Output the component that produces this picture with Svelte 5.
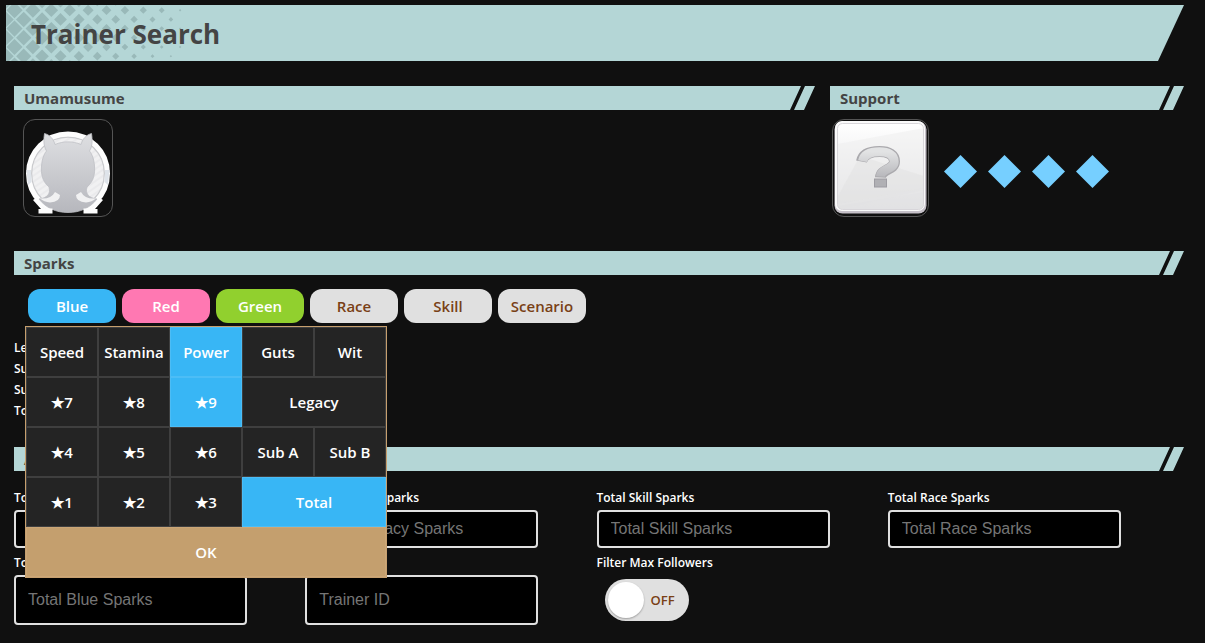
<script>
  const tabs = [
    { name: 'Blue', tone: 'blue' },
    { name: 'Red', tone: 'red' },
    { name: 'Green', tone: 'green' },
    { name: 'Race', tone: '' },
    { name: 'Skill', tone: '' },
    { name: 'Scenario', tone: '' }
  ];

  const cells = [
    'Speed', 'Stamina', 'Power', 'Guts', 'Wit',
    '★7', '★8', '★9', 'Legacy',
    '★4', '★5', '★6', 'Sub A', 'Sub B',
    '★1', '★2', '★3', 'Total'
  ];
  const wide = ['Legacy', 'Total'];
  let picked = $state(['Power', '★9', 'Total']);
  let followers = $state(false);

  function toggle(name) {
    picked = picked.includes(name) ? picked.filter((p) => p !== name) : [...picked, name];
  }

  const summary = ['Legacy', 'Sub A', 'Sub B', 'Total'];
  const fields = [
    { id: 'white', label: 'Total White Sparks' },
    { id: 'legacy', label: 'Total Legacy Sparks' },
    { id: 'skill', label: 'Total Skill Sparks' },
    { id: 'race', label: 'Total Race Sparks' },
    { id: 'blue', label: 'Total Blue Sparks' },
    { id: 'trainer', label: 'Trainer ID' }
  ];

  // Halftone: a staggered grid of diamonds that shrink to the right and downwards.
  let halftone = '';
  for (let row = 0; row < 8; row++) {
    const y = -4 + row * 9.2;
    for (let col = 0; col < 11; col++) {
      const x = (row % 2 ? -9.9 : -0.7) + col * 18.4;
      if (x > 176) continue;
      const r = x > 168 ? 1.2 : 8.4 - x * (0.034 + y * 0.0002);
      halftone += `M${x} ${y - r}L${x + r} ${y}L${x} ${y + r}L${x - r} ${y}Z`;
    }
  }
</script>

<main>
  <header>
    <svg class="halftone" width="190" height="56" aria-hidden="true"><path d={halftone} fill="#99b9b9" /></svg>
    <h1>Trainer Search</h1>
  </header>

  <div class="content">
    <div class="top">
      <section>
        <h2>Umamusume</h2>
        <div class="slot">
          <button class="card" aria-label="Choose Umamusume">
            <svg viewBox="0 0 88 96" width="88" height="96">
              <defs>
                <linearGradient id="body" x1="0" y1="0" x2="0" y2="1">
                  <stop offset="0" stop-color="#dedfe2" />
                  <stop offset="1" stop-color="#b6b7bd" />
                </linearGradient>
                <pattern id="stripe" width="5" height="5" patternUnits="userSpaceOnUse" patternTransform="rotate(55)">
                  <rect width="5" height="5" fill="#f1f1f2" />
                  <rect width="2" height="5" fill="#eaeaec" />
                </pattern>
                <clipPath id="ring"><rect width="88" height="89" /></clipPath>
              </defs>
              <g clip-path="url(#ring)">
                <circle cx="44" cy="53.500" r="39" fill="url(#stripe)" />
                <circle cx="44" cy="53.500" r="36.500" fill="none" stroke="#c9cacd" stroke-width="1.500" />
                <circle cx="44" cy="53.500" r="39.500" fill="none" stroke="#fdfdfd" stroke-width="5" />
                <path d="M2.500 50L7 50L7.500 62L4 65ZM85.500 50L81 50L80.500 62L84 65Z" fill="#dfe4ea" />
              </g>
              <path d="M15 79C23 78 27 74 25 67C18 61 17 54 17.500 46C18 39 20 34 22.500 31C19.500 26 19.500 20 20.500 13.500C26 15 29.500 19 31 24.500C39 21 49 21 57 24.500C58.500 19 62 15 67.500 13.500C68.500 20 68.500 26 65.500 31C68 34 70 39 70.500 46C71 54 70 61 63 67C61 74 65 78 73 79C66 88 56 92.500 44 92.500S22 88 15 79Z" fill="url(#body)" stroke="#bebfc4" stroke-width=".8" />
              <path d="M31 72L36 75Q36 82 26 82.500Q20 82 16 78.500Q27 79.500 31 72ZM57 72L52 75Q52 82 62 82.500Q68 82 72 78.500Q61 79.500 57 72Z" fill="#f1f1f2" />
              <path d="M12 78Q16 85 22 88.500H28.500V93.500H14.500V89H17L9 80ZM76 78Q72 85 66 88.500H59.500V93.500H73.500V89H71L79 80Z" fill="#fdfdfd" />
            </svg>
          </button>
        </div>
      </section>
      <section>
        <h2>Support</h2>
        <div class="slot support">
          <button class="card" aria-label="Choose support card">
            <svg viewBox="0 0 95 96" width="95" height="96">
              <defs>
                <linearGradient id="plate" x1="0" y1="0" x2="0" y2="1">
                  <stop offset="0" stop-color="#fff" />
                  <stop offset="1" stop-color="#dedee0" />
                </linearGradient>
                <linearGradient id="mark" x1="0" y1="0" x2="0" y2="1">
                  <stop offset="0" stop-color="#e2e3e4" />
                  <stop offset="1" stop-color="#b8b8bc" />
                </linearGradient>
                <clipPath id="inner"><rect x="5" y="4" width="85" height="85" rx="5" /></clipPath>
              </defs>
              <rect x="1.500" y="1.500" width="92" height="92" rx="8" fill="#c5c0c8" />
              <rect x="2" y="1" width="90" height="90" rx="7" fill="#fafafa" />
              <rect x="4.500" y="3.500" width="86" height="86" rx="5" fill="url(#plate)" stroke="#d8d6da" />
              <g clip-path="url(#inner)">
                <path d="M5 24L91 8V72L5 86Z" fill="#ededed" opacity=".5" />
                <path d="M27 36L5 76V90L91 70V56Z" fill="#dcdcde" opacity=".35" />
                <path d="M5 84L91 68V90H5Z" fill="#e4e4e6" opacity=".6" />
              </g>
              <path d="M28.500 41.500C30 34 37 31.500 46.500 31.500C56 31.500 61.500 35 61.500 41.500C61.500 50 48 49 47.500 57.500" fill="none" stroke="#aaa9ad" stroke-width="11" />
              <path d="M29.500 41.200C31 34 37.500 31.800 46.500 31.800C55.500 31.800 61.200 35 61.200 41.500C61.200 50 48 48 47.500 56.500" fill="none" stroke="url(#mark)" stroke-width="9" />
              <rect x="41.500" y="59" width="12" height="8" fill="#b0b0b4" stroke="#9d9ca2" />
            </svg>
          </button>
          <div class="limit">
            {#each [1, 2, 3, 4] as n (n)}
              <button class="pip" aria-label={`Limit break ${n}`}>
                <svg viewBox="0 0 33 33" width="33" height="33"><path d="M16.500 0L33 16.500L16.500 33L0 16.500Z" fill="#76cfff" /></svg>
              </button>
            {/each}
          </div>
        </div>
      </section>
    </div>

    <section class="sparks">
      <h2>Sparks</h2>
      <div class="tabs">
        {#each tabs as tab (tab.name)}
          <button class="tab {tab.tone}">{tab.name}</button>
        {/each}
        <div class="picker">
          {#each cells as name (name)}
            <button class:wide={wide.includes(name)} class:on={picked.includes(name)} onclick={() => toggle(name)}>{name}</button>
          {/each}
          <button class="ok">OK</button>
        </div>
      </div>
      <ul>
        {#each summary as line (line)}
          <li>{line}:</li>
        {/each}
      </ul>
    </section>

    <section>
      <h2>Additional</h2>
      <div class="fields">
        {#each fields as field (field.id)}
          <div class="field">
            <label for={field.id}>{field.label}</label>
            <input id={field.id} type="text" placeholder={field.label} />
          </div>
        {/each}
        <div class="field">
          <label for="followers">Filter Max Followers</label>
          <label class="switch">
            <input id="followers" type="checkbox" bind:checked={followers} />
            <span>{followers ? 'ON' : 'OFF'}</span>
          </label>
        </div>
      </div>
    </section>
  </div>
</main>

<style>
  :global(body) {
    background: #101010;
  }
  main {
    box-sizing: border-box;
    padding: 5px 21px 18px 6px;
    font-family: 'Open Sans', 'Noto Sans', sans-serif;
    color: #fff;
  }
  h1, h2, ul {
    margin: 0;
    padding: 0;
  }
  button {
    padding: 0;
    border: 0;
    background: none;
    font: inherit;
    color: inherit;
    cursor: pointer;
  }
  svg {
    display: block;
  }
  header {
    display: grid;
    height: 56px;
    background: #b4d6d6;
    color: #444;
    clip-path: polygon(0 0, 100% 0, calc(100% - 26px) 100%, 0 100%);
  }
  .halftone, h1 {
    grid-area: 1 / 1;
  }
  h1 {
    padding-left: 25px;
    font-size: 26px;
    line-height: 58px;
    font-weight: 700;
  }
  .content {
    padding: 25px 0 0 8px;
  }
  h2 {
    padding-left: 10px;
    background: #b4d6d6;
    color: #444;
    font-size: 15px;
    line-height: 24px;
    font-weight: 700;
    clip-path: polygon(0 0, calc(100% - 14px) 0, calc(100% - 25px) 100%, calc(100% - 21px) 100%, calc(100% - 10px) 0, 100% 0, calc(100% - 11px) 100%, 0 100%);
  }
  .top {
    display: grid;
    grid-template-columns: minmax(0, 1fr) 354px;
    gap: 15px;
  }
  .slot {
    display: flex;
    align-items: center;
    gap: 15px;
    padding: 9px;
  }
  .support {
    padding-left: 2px;
  }
  .card {
    border: 1px solid #555;
    border-radius: 12px;
    overflow: hidden;
  }
  .limit {
    display: flex;
    gap: 11px;
    padding-top: 6px;
  }
  .sparks {
    margin-top: 25px;
  }
  .tabs {
    position: relative;
    display: flex;
    gap: 6px;
    padding: 14px;
  }
  .tab {
    width: 88px;
    height: 34px;
    border-radius: 12px;
    background: #e0e0e0;
    color: #794016;
    font-size: 15px;
    font-weight: 600;
  }
  .blue, .red, .green {
    color: #fff;
  }
  .blue {
    background: #38b6f5;
  }
  .red {
    background: #ff78b2;
  }
  .green {
    background: #91d02e;
  }
  .picker {
    position: absolute;
    z-index: 1;
    top: 51px;
    left: 11px;
    display: grid;
    grid-template-columns: repeat(5, 72px);
    grid-auto-rows: 50px;
    border: 1px solid #c69f6e;
    font-size: 15px;
    font-weight: 600;
  }
  .picker button {
    border: 1px solid #3f3f3f;
    background: #242424;
  }
  .picker .wide {
    grid-column: span 2;
  }
  .picker .on {
    border-color: #4cbdf6;
    background: #38b6f5;
  }
  .picker .ok {
    grid-column: 1 / -1;
    border-color: #cba677;
    background: #c49f6e;
  }
  ul {
    list-style: none;
    font-size: 12px;
    line-height: 21px;
    font-weight: 600;
  }
  .sparks ul {
    padding-bottom: 26px;
  }
  .fields {
    display: grid;
    grid-template-columns: repeat(4, 1fr);
    padding: 17px 5px 0 0;
  }
  .field {
    display: flex;
    flex-direction: column;
    font-size: 12px;
    line-height: 20px;
    font-weight: 600;
  }
  .field:nth-child(-n + 4) {
    padding-bottom: 5px;
  }
  .field > label:first-child {
    height: 22px;
  }
  .field > input {
    box-sizing: border-box;
    flex: 1;
    width: 80%;
    min-height: 38px;
    padding: 0 12px;
    border: 2px solid #e0e0e0;
    border-radius: 4px;
    background: #000;
    color: #fff;
    font: 16px 'Liberation Sans', Arial, sans-serif;
  }
  .field > input::placeholder {
    color: #757575;
  }
  .switch {
    display: flex;
    align-items: center;
    box-sizing: border-box;
    gap: 7px;
    width: 84px;
    height: 42px;
    margin: 4px 8px;
    padding: 3px;
    border-radius: 21px;
    background: #e0e0e0;
    color: #794016;
    font-size: 13px;
  }
  .switch input {
    appearance: none;
    width: 36px;
    height: 36px;
    margin: 0;
    border-radius: 50%;
    background: #fff;
    box-shadow: 0 1px 2px rgb(0 0 0 / 30%);
  }
  .switch:has(input:checked) {
    flex-direction: row-reverse;
  }
</style>
